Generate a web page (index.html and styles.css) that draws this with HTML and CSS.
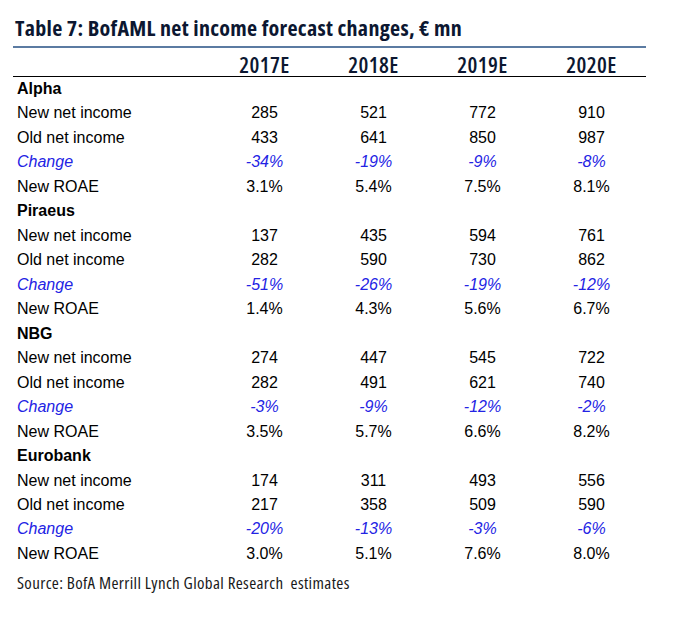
FILE: index.html
```html
<!DOCTYPE html>
<html lang="en">
<head>
<meta charset="utf-8">
<title>Table 7</title>
<link rel="stylesheet" href="styles.css">
</head>
<body>
<div class="sheet">
  <h1 class="title">Table 7: BofAML net income forecast changes, € mn</h1>
  <table class="grid">
    <colgroup>
      <col class="c-label"><col class="c-num"><col class="c-num"><col class="c-num"><col class="c-num">
    </colgroup>
    <thead>
      <tr><th></th><th>2017E</th><th>2018E</th><th>2019E</th><th>2020E</th></tr>
    </thead>
    <tbody>
      <tr class="group"><td>Alpha</td><td></td><td></td><td></td><td></td></tr>
      <tr><td>New net income</td><td>285</td><td>521</td><td>772</td><td>910</td></tr>
      <tr><td>Old net income</td><td>433</td><td>641</td><td>850</td><td>987</td></tr>
      <tr class="chg"><td>Change</td><td>-34%</td><td>-19%</td><td>-9%</td><td>-8%</td></tr>
      <tr><td>New ROAE</td><td>3.1%</td><td>5.4%</td><td>7.5%</td><td>8.1%</td></tr>

      <tr class="group"><td>Piraeus</td><td></td><td></td><td></td><td></td></tr>
      <tr><td>New net income</td><td>137</td><td>435</td><td>594</td><td>761</td></tr>
      <tr><td>Old net income</td><td>282</td><td>590</td><td>730</td><td>862</td></tr>
      <tr class="chg"><td>Change</td><td>-51%</td><td>-26%</td><td>-19%</td><td>-12%</td></tr>
      <tr><td>New ROAE</td><td>1.4%</td><td>4.3%</td><td>5.6%</td><td>6.7%</td></tr>

      <tr class="group"><td>NBG</td><td></td><td></td><td></td><td></td></tr>
      <tr><td>New net income</td><td>274</td><td>447</td><td>545</td><td>722</td></tr>
      <tr><td>Old net income</td><td>282</td><td>491</td><td>621</td><td>740</td></tr>
      <tr class="chg"><td>Change</td><td>-3%</td><td>-9%</td><td>-12%</td><td>-2%</td></tr>
      <tr><td>New ROAE</td><td>3.5%</td><td>5.7%</td><td>6.6%</td><td>8.2%</td></tr>

      <tr class="group"><td>Eurobank</td><td></td><td></td><td></td><td></td></tr>
      <tr><td>New net income</td><td>174</td><td>311</td><td>493</td><td>556</td></tr>
      <tr><td>Old net income</td><td>217</td><td>358</td><td>509</td><td>590</td></tr>
      <tr class="chg"><td>Change</td><td>-20%</td><td>-13%</td><td>-3%</td><td>-6%</td></tr>
      <tr><td>New ROAE</td><td>3.0%</td><td>5.1%</td><td>7.6%</td><td>8.0%</td></tr>
    </tbody>
  </table>
  <p class="source">Source: BofA Merrill Lynch Global Research&nbsp; estimates</p>
</div>
</body>
</html>
```

FILE: styles.css
```css
html, body {
  margin: 0;
  padding: 0;
  background: #ffffff;
}

.sheet {
  margin-left: 13px;
  padding-top: 15px;
  width: 633px;
}

.title {
  margin: 0;
  padding: 0 0 7px 2px;
  font-family: "Open Sans", "Noto Sans", sans-serif;
  font-stretch: 75%;
  font-weight: 700;
  font-size: 22px;
  letter-spacing: 0.3px;
  line-height: 24px;
  color: #0c1731;
  border-bottom: 2px solid #5b7ba2;
}

.grid {
  width: 633px;
  border-collapse: collapse;
  table-layout: fixed;
  font-family: "Liberation Sans", Arial, sans-serif;
  font-size: 16px;
  color: #000000;
}

.c-label { width: 197px; }
.c-num { width: 109px; }

.grid th {
  height: 28px;
  padding: 0;
  vertical-align: bottom;
  font-family: "Open Sans", "Noto Sans", sans-serif;
  font-stretch: 75%;
  font-weight: 600;
  font-size: 22px;
  letter-spacing: 0.4px;
  line-height: 24px;
  color: #0c1731;
  text-align: center;
  border-bottom: 1px solid #000000;
}

.grid td {
  padding: 0;
  height: 24.47px;
  line-height: 24.47px;
  text-align: center;
  white-space: nowrap;
}

.grid td:first-child {
  text-align: left;
  padding-left: 4px;
}

.group td:first-child {
  font-weight: 700;
}

.chg td {
  font-style: italic;
  color: #2323e4;
}

.source {
  margin: 0;
  padding: 5px 0 0 4px;
  font-family: "Open Sans", "Noto Sans", sans-serif;
  font-stretch: 75%;
  font-size: 17px;
  letter-spacing: 0.35px;
  line-height: 24px;
  color: #1a1a1a;
}
```
